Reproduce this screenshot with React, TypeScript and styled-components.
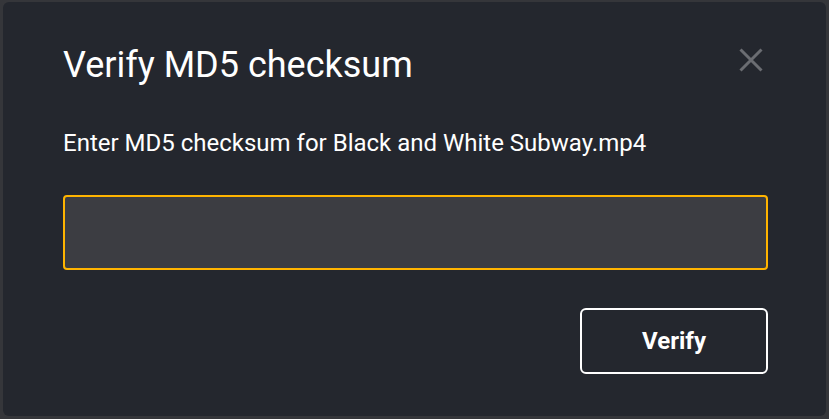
import React from "react";
import styled, { createGlobalStyle } from "styled-components";

const Global = createGlobalStyle`
  html, body { margin: 0; padding: 0; background: #35363a; }
  body { font-family: Roboto, "Noto Sans", sans-serif; }
  * { box-sizing: border-box; }
`;

const Backdrop = styled.div`
  width: 829px;
  height: 419px;
  padding: 2px 3px 3px 3px;
  background: #35363a;
`;

const Dialog = styled.div`
  width: 100%;
  height: 100%;
  background: #24272e;
  border-radius: 6px;
  padding: 42px 58px 0 60px;
  display: flex;
  flex-direction: column;
  color: #ffffff;
`;

const Header = styled.div`
  display: flex;
  align-items: flex-start;
  justify-content: space-between;
`;

const Title = styled.h1`
  margin: 0;
  font-size: 36px;
  font-weight: 400;
  line-height: 42px;
  color: #ffffff;
`;

const CloseButton = styled.button`
  border: none;
  background: transparent;
  padding: 0;
  width: 24px;
  height: 24px;
  margin: 4px 5px 0 0;
  display: flex;
  align-items: center;
  justify-content: center;
  cursor: pointer;
`;

const Message = styled.p`
  margin: 43px 0 0 0;
  font-size: 24px;
  line-height: 28px;
  color: #ffffff;
`;

const Input = styled.input`
  margin-top: 38px;
  width: 100%;
  height: 75px;
  background: #3c3d42;
  border: 2px solid #ffb400;
  border-radius: 4px;
  outline: none;
  color: #fff;
  font-size: 20px;
  font-family: inherit;
  padding: 0 16px;
`;

const Actions = styled.div`
  display: flex;
  justify-content: flex-end;
  margin-top: 38px;
`;

const VerifyButton = styled.button`
  width: 188px;
  height: 66px;
  background: transparent;
  border: 2px solid #ffffff;
  border-radius: 6px;
  color: #ffffff;
  font-family: inherit;
  font-size: 24px;
  font-weight: 700;
  cursor: pointer;
`;

export default function App() {
  return (
    <>
      <Global />
      <Backdrop>
        <Dialog>
          <Header>
            <Title>Verify MD5 checksum</Title>
            <CloseButton aria-label="Close">
              <svg width="24" height="24" viewBox="0 0 24 24">
                <path d="M1.5 1.5 L22.5 22.5 M22.5 1.5 L1.5 22.5" stroke="#6b6d72" strokeWidth="3" />
              </svg>
            </CloseButton>
          </Header>
          <Message>Enter MD5 checksum for Black and White Subway.mp4</Message>
          <Input />
          <Actions>
            <VerifyButton>Verify</VerifyButton>
          </Actions>
        </Dialog>
      </Backdrop>
    </>
  );
}
